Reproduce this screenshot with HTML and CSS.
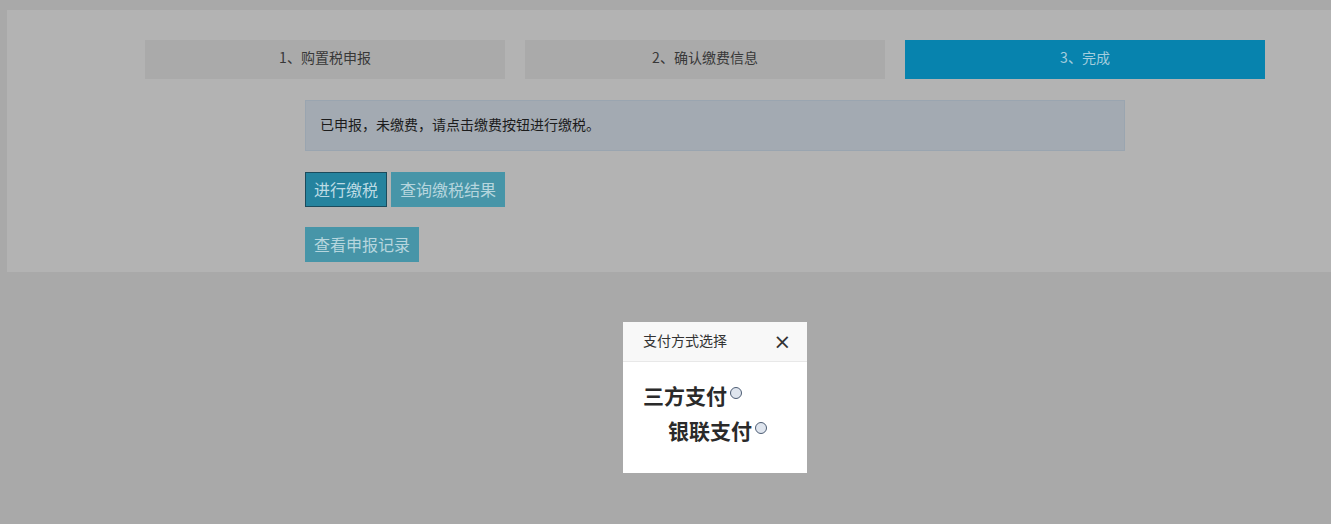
FILE: index.html
```html
<!DOCTYPE html>
<html lang="zh-CN">
<head>
    <meta charset="UTF-8">
    <meta name="viewport" content="width=device-width, initial-scale=1.0">
    <title>购置税申报</title>
    <link rel="stylesheet" href="styles.css">
</head>
<body>
    <div class="container">
        <div class="steps">
            <div class="step">1、购置税申报</div>
            <div class="step">2、确认缴费信息</div>
            <div class="step active">3、完成</div>
        </div>

        <div class="content">
            <div class="alert">已申报，未缴费，请点击缴费按钮进行缴税。</div>

            <div class="btn-row">
                <button class="btn btn-primary">进行缴税</button>
                <button class="btn">查询缴税结果</button>
            </div>
            <div class="btn-row">
                <button class="btn">查看申报记录</button>
            </div>
        </div>
    </div>

    <!-- 支付方式弹窗 -->
    <div class="modal">
        <div class="modal-header">
            <span class="modal-title">支付方式选择</span>
            <span class="modal-close">&times;</span>
        </div>
        <div class="modal-body">
            <label class="pay-option">三方支付<input type="radio" name="pay"></label>
            <label class="pay-option indent">银联支付<input type="radio" name="pay"></label>
        </div>
    </div>
</body>
</html>
```

FILE: styles.css
```css
* {
    margin: 0;
    padding: 0;
    box-sizing: border-box;
    font-family: "Noto Sans CJK SC", "Microsoft YaHei", sans-serif;
}

body {
    background-color: #a9a9a9;
    height: 100vh;
    overflow: hidden;
    position: relative;
}

.container {
    background-color: #b3b3b3;
    margin: 10px 0 0 7px;
    padding: 30px 0 10px 138px;
}

.steps {
    display: flex;
    gap: 20px;
}

.step {
    width: 360px;
    height: 39px;
    line-height: 35px;
    text-align: center;
    font-size: 14px;
    color: #383838;
    background-color: #aaaaaa;
}

.step.active {
    background-color: #0783ae;
    color: #a3cddd;
}

.content {
    padding-left: 160px;
    margin-top: 21px;
}

.alert {
    width: 820px;
    height: 51px;
    padding: 0 14px;
    line-height: 47px;
    font-size: 14px;
    color: #1c1c1c;
    background-color: #a3aab2;
    border: 1px solid #9aa5b0;
}

.btn-row {
    display: flex;
    gap: 4px;
    margin-top: 21px;
}

.btn-row + .btn-row {
    margin-top: 20px;
}

.btn {
    height: 35px;
    padding: 0 8px;
    font-size: 16px;
    line-height: 31px;
    color: #b6d6de;
    background-color: #4795a8;
    border: 1px solid #4795a8;
    cursor: pointer;
}

.btn-primary {
    background-color: #25839e;
    border-color: #1b4b5c;
    color: #bcdbe4;
}

.modal {
    position: absolute;
    left: 623px;
    top: 322px;
    width: 184px;
    height: 151px;
    background-color: #ffffff;
}

.modal-header {
    height: 40px;
    padding: 0 16px 0 20px;
    display: flex;
    align-items: center;
    justify-content: space-between;
    background-color: #f8f8f8;
    border-bottom: 1px solid #e8e8e8;
}

.modal-title {
    font-size: 14px;
    color: #333;
    margin-top: -4px;
}

.modal-close {
    font-size: 21px;
    line-height: 1;
    color: #333;
    font-family: "DejaVu Sans", sans-serif;
    margin-top: 2px;
}

.modal-body {
    padding: 15px 20px 0;
}

.pay-option {
    display: flex;
    align-items: center;
    height: 35px;
    font-size: 21px;
    font-weight: bold;
    color: #2a2a2a;
}

.pay-option.indent {
    padding-left: 25px;
}

.pay-option input {
    appearance: none;
    width: 12px;
    height: 12px;
    margin: -4px 0 0 3px;
    border: 1px solid #4d5d74;
    border-radius: 50%;
    background-color: #dfe5ee;
}
```
